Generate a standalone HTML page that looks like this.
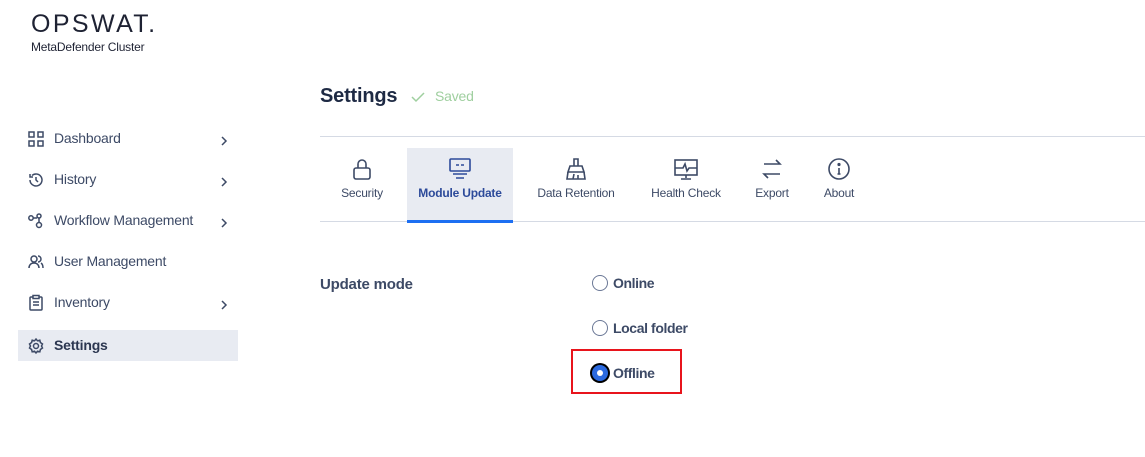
<!DOCTYPE html>
<html><head><style>
*{margin:0;padding:0;box-sizing:border-box}
body{width:1145px;height:457px;background:#fff;font-family:"Liberation Sans",sans-serif;color:#3d4a66;position:relative;overflow:hidden;letter-spacing:-0.2px}
.a{position:absolute}
.nav{font-size:14px;color:#3d4a66}
.nav .it{position:absolute;left:18px;width:220px;height:32px}
.nav .it span{position:absolute;left:36px;top:7px}
.nav svg{position:absolute;left:9px;top:7px}
.tab{position:absolute;top:148px;height:74px;text-align:center;font-size:12px;color:#3d4a66}
.tab .lb{position:absolute;top:38px;left:0;right:0}
.tab svg{position:absolute;top:9px;left:50%;margin-left:-12px}
.radio{position:absolute;width:16px;height:16px;border:1.5px solid #6b7896;border-radius:50%}
.rl{position:absolute;font-size:14px;font-weight:bold;color:#3d4a66;letter-spacing:-0.4px}
</style></head><body>
<div class="a" style="left:31px;top:10px;font-size:25px;letter-spacing:2.4px;color:#1e2233;font-weight:300">OPSWAT.</div>
<div class="a" style="left:31px;top:40px;font-size:12px;color:#1e2233">MetaDefender Cluster</div>

<div class="nav">
<div class="it" style="top:123px"><svg width="18" height="18" viewBox="0 0 18 18" fill="none" stroke="#3d4a66" stroke-width="1.5"><rect x="2" y="2" width="5" height="5"/><rect x="11" y="2" width="5" height="5"/><rect x="2" y="11" width="5" height="5"/><rect x="11" y="11" width="5" height="5"/></svg><span>Dashboard</span><svg width="10" height="14" viewBox="0 0 10 14" fill="none" stroke="#3d4a66" stroke-width="1.5" style="left:201px;top:11px"><path d="M3 3l4 4-4 4"/></svg></div>
<div class="it" style="top:164px"><svg width="18" height="18" viewBox="0 0 18 18" fill="none" stroke="#3d4a66" stroke-width="1.5"><path d="M3 9a6 6 0 1 0 2-4.5M3 3v3h3M9 6v3l2 2"/></svg><span>History</span><svg width="10" height="14" viewBox="0 0 10 14" fill="none" stroke="#3d4a66" stroke-width="1.5" style="left:201px;top:11px"><path d="M3 3l4 4-4 4"/></svg></div>
<div class="it" style="top:205px"><svg width="18" height="18" viewBox="0 0 18 18" fill="none" stroke="#3d4a66" stroke-width="1.5"><circle cx="4" cy="6" r="2.2"/><circle cx="12" cy="4" r="2"/><circle cx="12" cy="13" r="2.5"/><path d="M6 6h4M12 6v4.5"/></svg><span>Workflow Management</span><svg width="10" height="14" viewBox="0 0 10 14" fill="none" stroke="#3d4a66" stroke-width="1.5" style="left:201px;top:11px"><path d="M3 3l4 4-4 4"/></svg></div>
<div class="it" style="top:246px"><svg width="18" height="18" viewBox="0 0 18 18" fill="none" stroke="#3d4a66" stroke-width="1.5"><circle cx="7" cy="6" r="3"/><path d="M2 15c0-3 2-5 5-5s5 2 5 5M11 3a3 3 0 0 1 0 6M14 10c1.5 1 2 3 2 5"/></svg><span>User Management</span></div>
<div class="it" style="top:287px"><svg width="18" height="18" viewBox="0 0 18 18" fill="none" stroke="#3d4a66" stroke-width="1.5"><rect x="3" y="3" width="12" height="13" rx="1"/><rect x="6" y="1.5" width="6" height="3" fill="#fff"/><path d="M6 8h6M6 11h6"/></svg><span>Inventory</span><svg width="10" height="14" viewBox="0 0 10 14" fill="none" stroke="#3d4a66" stroke-width="1.5" style="left:201px;top:11px"><path d="M3 3l4 4-4 4"/></svg></div>
<div class="it" style="top:330px;background:#e8ebf2;height:31px"><svg width="18" height="18" viewBox="0 0 18 18" fill="none" stroke="#3d4a66" stroke-width="1.5"><circle cx="9" cy="9" r="2.5"/><path d="M9 2l1.5 1.8 2.3-.6.6 2.3L15.5 7l-1 2 1 2-2.1 1.5-.6 2.3-2.3-.6L9 16l-1.5-1.8-2.3.6-.6-2.3L2.5 11l1-2-1-2 2.1-1.5.6-2.3 2.3.6z"/></svg><span style="font-weight:bold;color:#2b3650">Settings</span></div>
</div>

<div class="a" style="left:320px;top:85px;font-size:20px;font-weight:bold;color:#1e2a44">Settings</div>
<svg class="a" style="left:410px;top:90px" width="16" height="14" viewBox="0 0 16 14" fill="none" stroke="#9fcf9f" stroke-width="1.5"><path d="M2 7l4 4 8-8"/></svg>
<div class="a" style="left:435px;top:88px;font-size:14px;color:#9fcf9f">Saved</div>

<div class="a" style="left:320px;top:136px;width:825px;height:1px;background:#d5dae4"></div>
<div class="a" style="left:320px;top:221px;width:825px;height:1px;background:#d5dae4"></div>

<div class="tab" style="left:330px;width:64px"><svg width="24" height="24" viewBox="0 0 24 24" fill="none" stroke="#3d4a66" stroke-width="1.6"><rect x="4" y="11" width="16" height="11" rx="2"/><path d="M8 11V7a4 4 0 0 1 8 0v4"/></svg><div class="lb">Security</div></div>
<div class="tab" style="left:407px;width:106px;background:#e8ebf2;font-weight:bold;color:#2c4a9a"><svg width="24" height="24" viewBox="0 0 24 24" fill="none" stroke="#2c4a9a" stroke-width="1.6"><rect x="2" y="2" width="20" height="12" rx="1"/><path d="M8 8h3M13 8h3M5 17h14M8 21h8"/></svg><div class="lb">Module Update</div><div class="a" style="left:0;right:0;bottom:-1px;height:3px;background:#1d6ff2"></div></div>
<div class="tab" style="left:526px;width:100px"><svg width="24" height="24" viewBox="0 0 24 24" fill="none" stroke="#3d4a66" stroke-width="1.6"><path d="M10 2h4v7h-4zM6 9h12l2 6H4zM4 15l-1 7h18l-1-7M9 22l1-5M14 22v-4"/></svg><div class="lb">Data Retention</div></div>
<div class="tab" style="left:640px;width:92px"><svg width="24" height="24" viewBox="0 0 24 24" fill="none" stroke="#3d4a66" stroke-width="1.6"><rect x="1" y="3" width="22" height="15"/><path d="M1 11h8l2-4 2 7 2-3h8M12 18v3M7 22h10"/></svg><div class="lb">Health Check</div></div>
<div class="tab" style="left:746px;width:52px"><svg width="24" height="24" viewBox="0 0 24 24" fill="none" stroke="#3d4a66" stroke-width="1.6"><path d="M4 7h16l-4-4M20 17H4l4 4"/></svg><div class="lb">Export</div></div>
<div class="tab" style="left:814px;width:50px"><svg width="24" height="24" viewBox="0 0 24 24" fill="none" stroke="#3d4a66" stroke-width="1.6"><circle cx="12" cy="12" r="10"/><path d="M12 11v6M10.5 17h3"/><circle cx="12" cy="7.5" r=".8" fill="#3d4a66"/></svg><div class="lb">About</div></div>

<div class="a" style="left:320px;top:276px;font-size:15px;font-weight:bold;color:#3d4a66">Update mode</div>
<div class="radio" style="left:592px;top:275px"></div><div class="rl" style="left:613px;top:275px">Online</div>
<div class="radio" style="left:592px;top:320px"></div><div class="rl" style="left:613px;top:320px">Local folder</div>
<div class="a" style="left:571px;top:349px;width:111px;height:45px;border:2px solid #e8141c"></div>
<div class="a" style="left:590px;top:363px;width:20px;height:20px;border-radius:50%;background:#000"></div>
<div class="a" style="left:592px;top:365px;width:16px;height:16px;border-radius:50%;background:#2b6ae0"></div>
<div class="a" style="left:597px;top:370px;width:6px;height:6px;border-radius:50%;background:#fff"></div>
<div class="rl" style="left:613px;top:365px">Offline</div>
</body></html>
